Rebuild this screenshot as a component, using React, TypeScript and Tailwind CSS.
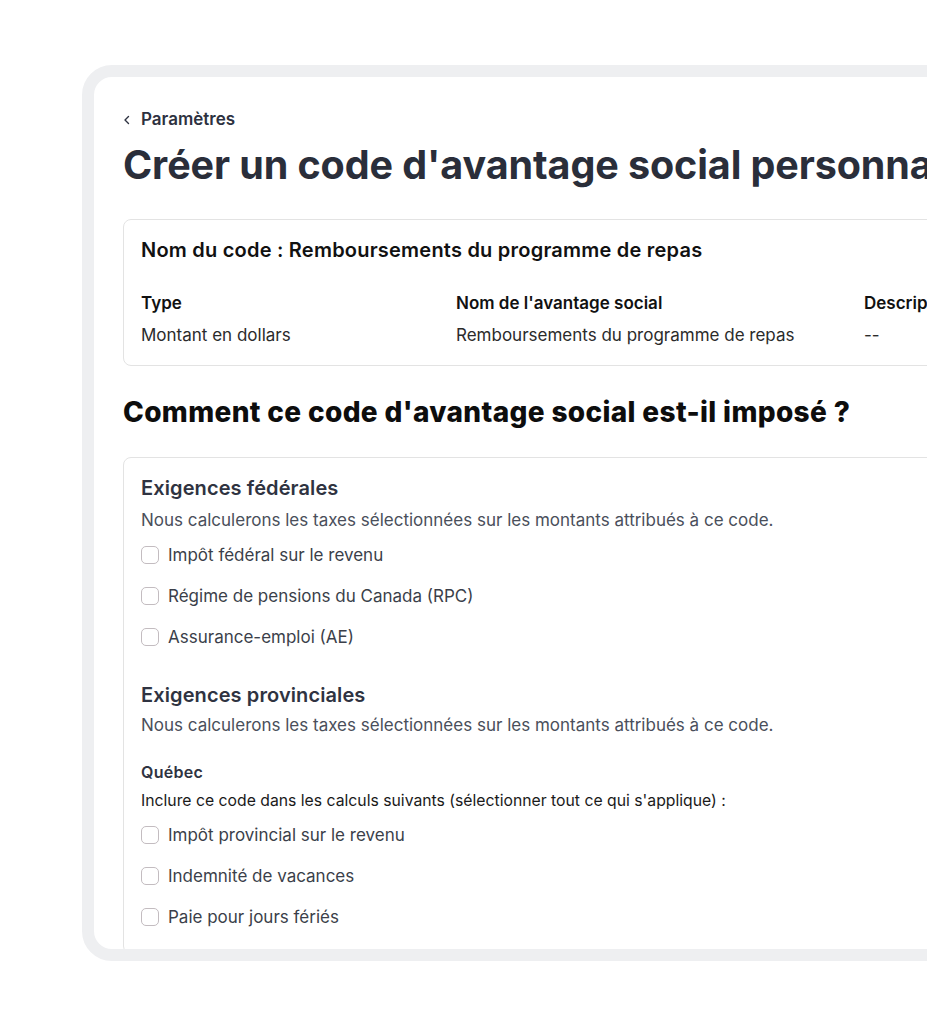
import React from "react";

function Box({ label }: { label: string }) {
  return (
    <label className="flex items-center gap-[9px] h-6">
      <span className="w-[18px] h-[18px] rounded-[5px] border-[1.5px] border-[#c3bcc0] bg-white shrink-0" />
      <span className="text-[17px] leading-6 text-[#3b3f4a]">{label}</span>
    </label>
  );
}

export default function App() {
  return (
    <div
      className="w-[927px] h-[1024px] overflow-hidden bg-white"
      style={{ fontFamily: "Inter, 'Noto Sans', sans-serif" }}
    >
      <div className="ml-[82px] mt-[65px] w-[1000px] h-[896px] border-[12px] border-[#eeeff1] rounded-[30px] overflow-hidden bg-white">
        <div className="pl-[29px] pt-[31px]">
          <div className="flex items-center gap-[10px] h-6 text-[17px] font-semibold text-[#2d3140]">
            <svg width="8" height="10" viewBox="0 0 8 10" fill="none">
              <path d="M5.5 1.5 L2 5 L5.5 8.5" stroke="#2d3140" strokeWidth="1.4" strokeLinecap="round" strokeLinejoin="round" />
            </svg>
            <span>Paramètres</span>
          </div>
          <h1 className="mt-[9px] text-[39.5px] leading-[48px] font-bold text-[#2a2e3a] whitespace-nowrap tracking-[-0.1px]">
            Créer un code d'avantage social personnalisé
          </h1>

          <div className="mt-[30px] border border-[#e3e3e3] rounded-[8px] pl-[17px] pt-[16px] pb-[18px]">
            <div className="text-[20px] leading-7 font-semibold text-[#111111] whitespace-nowrap tracking-[0.22px]">
              Nom du code : Remboursements du programme de repas
            </div>
            <div className="mt-[27px] flex whitespace-nowrap">
              <div className="w-[315px] flex flex-col gap-2">
                <div className="text-[17px] leading-6 font-semibold text-[#111111]">Type</div>
                <div className="text-[17px] leading-6 text-[#2b2b2b]">Montant en dollars</div>
              </div>
              <div className="w-[408px] flex flex-col gap-2">
                <div className="text-[17px] leading-6 font-semibold text-[#111111]">Nom de l'avantage social</div>
                <div className="text-[17px] leading-6 text-[#2b2b2b]">Remboursements du programme de repas</div>
              </div>
              <div className="flex flex-col gap-2">
                <div className="text-[17px] leading-6 font-semibold text-[#111111]">Description</div>
                <div className="text-[17px] leading-6 text-[#2b2b2b]">--</div>
              </div>
            </div>
          </div>

          <h2 className="mt-[30px] text-[28px] leading-8 font-extrabold text-[#0d0d0d] whitespace-nowrap tracking-[0.35px]">
            Comment ce code d'avantage social est-il imposé ?
          </h2>

          <div className="mt-[29px] border border-[#e3e3e3] rounded-[8px] pl-[17px] pt-[16px] pb-[24px] whitespace-nowrap">
            <div className="text-[20px] leading-7 font-semibold text-[#2f3341] tracking-[0.1px]">Exigences fédérales</div>
            <div className="mt-[6px] text-[17px] leading-6 text-[#4a4f5b]">
              Nous calculerons les taxes sélectionnées sur les montants attribués à ce code.
            </div>
            <div className="mt-[11px] flex flex-col gap-[17px]">
              <Box label="Impôt fédéral sur le revenu" />
              <Box label="Régime de pensions du Canada (RPC)" />
              <Box label="Assurance-emploi (AE)" />
            </div>

            <div className="mt-[32px] text-[20px] leading-7 font-semibold text-[#2f3341] tracking-[0.1px]">Exigences provinciales</div>
            <div className="mt-[4px] text-[17px] leading-6 text-[#4a4f5b]">
              Nous calculerons les taxes sélectionnées sur les montants attribués à ce code.
            </div>
            <div className="mt-[25px] text-[16px] leading-5 font-semibold text-[#2f3341] tracking-[0.3px]">Québec</div>
            <div className="mt-[9px] text-[15.75px] leading-5 text-[#1a1a1a]">
              Inclure ce code dans les calculs suivants (sélectionner tout ce qui s'applique) :
            </div>
            <div className="mt-[12px] flex flex-col gap-[17px]">
              <Box label="Impôt provincial sur le revenu" />
              <Box label="Indemnité de vacances" />
              <Box label="Paie pour jours fériés" />
            </div>
          </div>
        </div>
      </div>
    </div>
  );
}
